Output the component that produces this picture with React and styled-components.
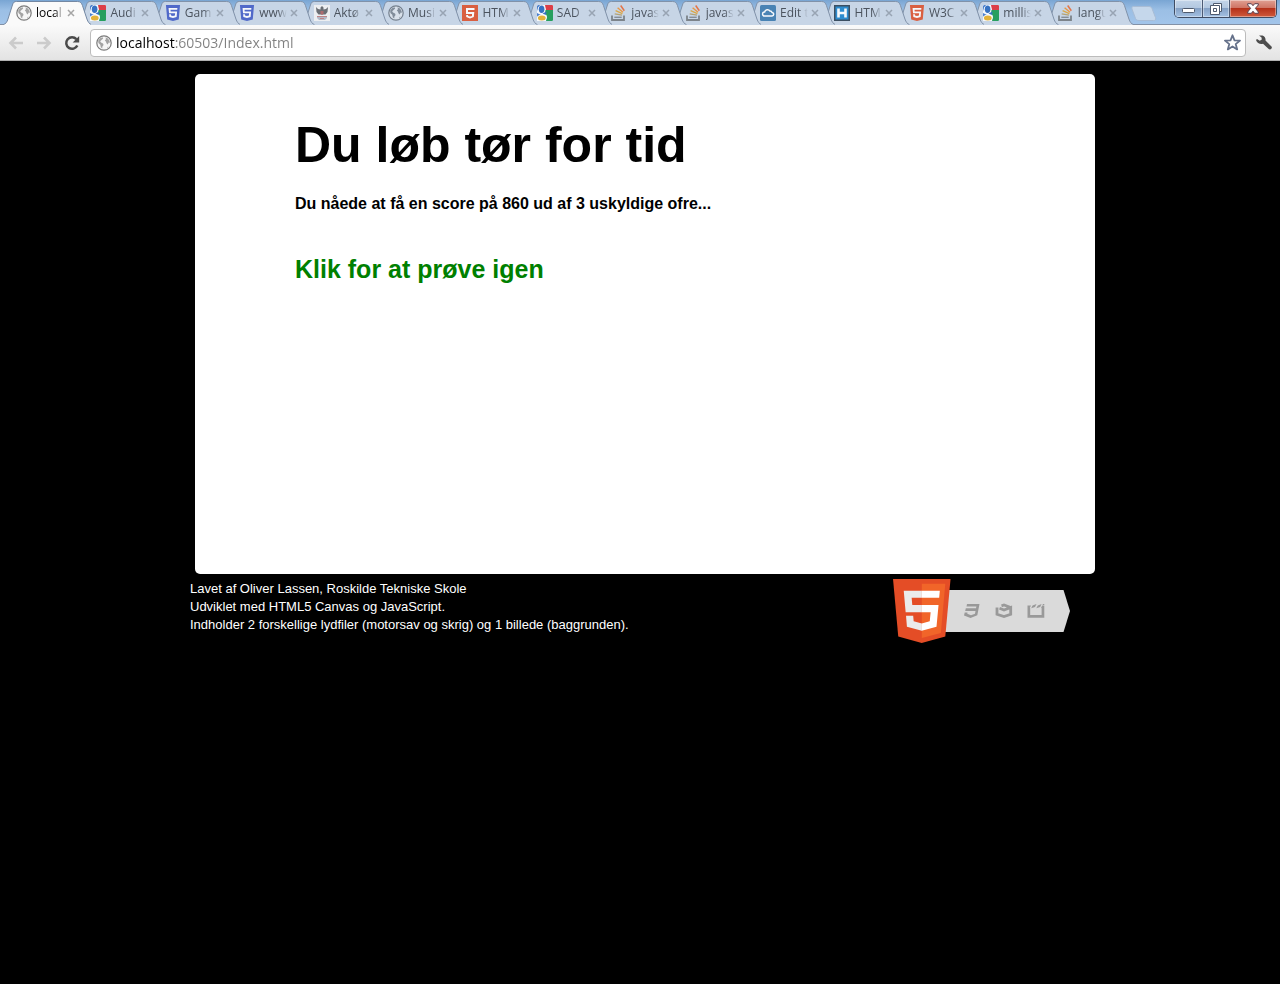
import React from "react";
import styled, { createGlobalStyle, css } from "styled-components";

const GlobalStyle = createGlobalStyle`
  * { box-sizing: border-box; }
  html, body { margin: 0; background: #000; }
  body { font-family: "Liberation Sans", Arial, sans-serif; }
  button { border: 0; padding: 0; background: none; font: inherit; cursor: pointer; }
  svg { display: block; flex: none; }
`;

const TitleBar = styled.header`
  display: flex;
  align-items: flex-start;
  height: 25px;
  padding-left: 4px;
  overflow: hidden;
  background: linear-gradient(to bottom, #79a5d3 0, #9bbfe5 10px, #a3c5ea 100%);
  box-shadow: inset 0 -1px #8391a6;
`;

const TabStrip = styled.nav`
  display: flex;
  flex: 1 1 0;
  min-width: 0;
`;

const Tab = styled.div`
  position: relative;
  z-index: ${(p) => p.$level};
  display: flex;
  align-items: center;
  flex: 1 1 0;
  min-width: 0;
  height: 25px;
  padding: 1px 0 0 12px;
`;

const TabShape = styled.svg`
  position: absolute;
  inset: 0;
  z-index: -1;
  width: calc(100% + 13px);
  height: 25px;
`;

const TabTitle = styled.button`
  display: flex;
  align-items: center;
  gap: 4px;
  width: 51px;
  flex: none;
  font-family: "Open Sans", sans-serif;
  font-size: 12px;
  line-height: 16px;
  color: ${(p) => (p.$active ? "#000" : "#4b535e")};
  > svg { opacity: ${(p) => (p.$active ? 1 : 0.85)}; }
`;

const TabLabel = styled.span`
  flex: 1 1 0;
  min-width: 0;
  white-space: nowrap;
  text-align: left;
  mask-image: linear-gradient(to right, #000 60%, transparent 90%);
`;

const TabClose = styled.button`
  color: ${(p) => (p.$active ? "#a5a5a5" : "#98a4b3")};
`;

const NewTab = styled.button`
  margin: 6px 17px 0 11px;
`;

const WindowControls = styled.div`
  display: flex;
  height: 18px;
  margin-right: 3px;
  border: 1px solid #3f4c63;
  border-top: 0;
  border-radius: 0 0 5px 5px;
  overflow: hidden;
`;

const WindowButton = styled.button`
  display: flex;
  align-items: center;
  justify-content: center;
  width: 27px;
  background: linear-gradient(#c3d5e9 0, #b3c8e0 45%, #86a2c6 50%, #a3c0e2 100%);
  box-shadow: inset 0 0 0 1px rgba(255, 255, 255, 0.4);
  & + & { border-left: 1px solid #4c5b74; }
  ${(p) =>
    p.$danger &&
    css`
      width: 47px;
      background: linear-gradient(#e0a093 0, #cf7565 45%, #b5311a 50%, #cf5a3c 100%);
    `}
`;

const Toolbar = styled.div`
  display: flex;
  align-items: center;
  height: 36px;
  padding: 0 8px;
  background: linear-gradient(#fafafa, #e3e3e3);
  border-bottom: 1px solid #b0b0b0;
`;

const ToolButton = styled.button`
  width: 16px;
  height: 16px;
  margin-right: 12px;
  &:last-child { margin: 0 0 0 10px; }
`;

const AddressBar = styled.label`
  display: flex;
  align-items: center;
  flex: 1 1 0;
  min-width: 0;
  height: 28px;
  margin-left: -2px;
  padding: 0 4px 0 5px;
  background: #fff;
  border: 1px solid #bcbcbc;
  border-radius: 4px;
`;

const AddressInput = styled.input`
  flex: 1 1 0;
  min-width: 0;
  height: 20px;
  margin: 0 4px;
  padding: 0;
  border: 0;
  outline: 0;
  font-family: "Open Sans", sans-serif;
  font-size: 14px;
  line-height: 20px;
  color: transparent;
  background: linear-gradient(to right, #000 59px, #808080 59px);
  background-clip: text;
  -webkit-background-clip: text;
`;

const Page = styled.main`
  max-width: 900px;
  margin: 0 auto;
  padding-top: 13px;
`;

const GamePanel = styled.section`
  min-height: 500px;
  margin: 0 -5px 5px 5px;
  padding: 41px 100px;
  background: #fff;
  border-radius: 5px;
  color: #000;
`;

const Heading = styled.h1`
  margin: 0 0 19px;
  font-size: 50px;
  line-height: 60px;
`;

const Score = styled.p`
  margin: 0 0 40px;
  font-size: 16px;
  font-weight: bold;
  line-height: 20px;
`;

const RetryButton = styled.button`
  display: block;
  font-size: 25px;
  font-weight: bold;
  line-height: 30px;
  color: #008000;
`;

const Footer = styled.footer`
  display: flex;
  justify-content: space-between;
  align-items: flex-start;
  padding-right: 20px;
`;

const Credits = styled.p`
  margin: 1px 0 0;
  font-size: 13px;
  line-height: 18px;
  color: #fff;
`;

const shieldWhite =
  "M114 94H397L392 150H176L181 208H387L371 382 255 414 139 382 132 293H188L192 338 255 355 318 338 325 265H129z";

const Globe = ({ muted }) => (
  <svg width="16" height="16" viewBox="0 0 16 16">
    <circle cx="8" cy="8" r="7.2" fill={muted ? "#dde4ec" : "#f6f6f6"} stroke={muted ? "#66717e" : "#7b7b7b"} strokeWidth="1.2" />
    <path d="M2.2 5.5 4 3.2 6.5 2.2 7.2 3.4 5.8 4.8 4.2 6.2 5 7.6 7 8.5 7.6 10 6.4 11.6 6.2 13.6 4.8 12.2 4.3 9.8 2.4 8zM9.5 2.2 12 3.4 13.6 6 13.7 8 12.6 7.6 11.8 9.6 10.6 8.6 9.8 6.6 8.8 5.2 10 4.2zM11 12.2 12.6 11.4 11.2 13z" fill={muted ? "#75808d" : "#a3a3a3"} />
  </svg>
);

const Google = () => (
  <svg width="16" height="16" viewBox="0 0 16 16">
    <path d="M0 0h16v16H0z" fill="#fff" />
    <path d="M8 0h7a1 1 0 0 1 1 1v4H9z" fill="#e0242d" />
    <path d="M8.500 5H16v10a1 1 0 0 1-1 1H9l1-4-2-4z" fill="#0c9648" />
    <path d="M0 6V1l1-1h2L1 4zM0 8l4 2-4 2z" fill="#3a74c9" />
    <path d="M5 .2C8.200.2 9 4 7.800 6.200 7.200 8 10 9 9.700 12.500 9.300 15.500 7 16 5 16 2 16 0 14.500 0 12.800 0 10.500 3 10 5 9.600L4.600 8.400C1.600 8.400.4 6 .7 4 1 1.400 3 .2 5 .2z" fill="#fff" />
    <ellipse cx="4.600" cy="4.200" rx="2.800" ry="3.700" fill="#1d61bd" />
    <ellipse cx="4.800" cy="13" rx="3.900" ry="2.500" fill="#e9ae1b" />
    <path d="M5.500 8.500 9.500 6.500 9 10z" fill="#1d61bd" />
  </svg>
);

const Shield = ({ color }) => (
  <svg width="16" height="16" viewBox="0 0 512 512">
    <path d="M71 460 30 0H481L440 460 255 512z" fill={color} />
    <path d={shieldWhite} fill="#fff" />
  </svg>
);

const HtmlSquare = () => (
  <svg width="16" height="16" viewBox="0 0 16 16">
    <path d="M0 0h16v16H0z" fill="#dd4b25" />
    <path d="M4 3h8.5v2H6v2h6.3l-.5 5L8 13.5 4.2 12V10H6l.2 1 1.8.6 2-.6V9H4z" fill="#fff" />
  </svg>
);

const Crest = () => (
  <svg width="16" height="16" viewBox="0 0 16 16">
    <path d="M0 0h16v16H0z" fill="#f3f3f3" />
    <path d="M2 2 4 4 6.500 4.500 6.500 2.500 8 1 9.500 2.500 9.500 4.500 12 4 14 2 13.500 7 11.500 9.500 4.500 9.500 2.500 7z" fill="#5a5d61" />
    <path d="M6.500 6h3v3L8 10 6.500 9z" fill="#a8595b" />
    <path d="M3 11h10v2l-2 2H5l-2-2z" fill="#aeb6c5" />
    <path d="M3 11h10v1H3zM6 13h4v1H6z" fill="#bd7678" />
  </svg>
);

const Stack = () => (
  <svg width="16" height="16" viewBox="0 0 16 16" fill="none">
    <path d="M1 10.500V15h12v-4.500" stroke="#6f757b" strokeWidth="1.800" />
    <path d="M3.300 12.300h7.400" stroke="#7b8188" strokeWidth="1.400" />
    <path d="m3.700 8.900 7.300 1.300" stroke="#b29a62" strokeWidth="1.300" />
    <path d="m4.600 5.700 6.800 3" stroke="#dda02b" strokeWidth="1.400" />
    <path d="m6.600 2.700 5.400 4.600" stroke="#ee8d27" strokeWidth="1.400" />
    <path d="m9.700.5 3.600 5.200" stroke="#e8642e" strokeWidth="1.500" />
  </svg>
);

const Cloud = () => (
  <svg width="16" height="16" viewBox="0 0 16 16">
    <rect width="16" height="16" rx="1.500" fill="#3475ac" />
    <path d="M4.500 11h7.300a1.800 1.800 0 0 0 .2-3.600 2 2 0 0 0-2-1.400A3 3 0 0 0 4.600 7 2 2 0 0 0 4.500 11z" fill="none" stroke="#fff" strokeWidth="1.500" />
  </svg>
);

const LetterH = () => (
  <svg width="16" height="16" viewBox="0 0 16 16">
    <path d="M.75.75h14.500v14.500H.75z" fill="#1480cb" stroke="#24384b" strokeWidth="1.500" />
    <path d="M4.500 3.500v9M11.500 3.500v9M5 8h6" stroke="#fff" strokeWidth="2.600" />
  </svg>
);

const tabs = [
  { label: "local", icon: <Globe /> },
  { label: "Audi", icon: <Google /> },
  { label: "Gam", icon: <Shield color="#3c57c4" /> },
  { label: "www", icon: <Shield color="#3c57c4" /> },
  { label: "Aktø", icon: <Crest /> },
  { label: "Musi", icon: <Globe muted /> },
  { label: "HTM", icon: <HtmlSquare /> },
  { label: "SAD", icon: <Google /> },
  { label: "javas", icon: <Stack /> },
  { label: "javas", icon: <Stack /> },
  { label: "Edit t", icon: <Cloud /> },
  { label: "HTM", icon: <LetterH /> },
  { label: "W3C", icon: <Shield color="#dd4b25" /> },
  { label: "millis", icon: <Google /> },
  { label: "langu", icon: <Stack /> },
];

const tabPath = "M-1 24.5C2 24 3 22 4 19L8.5 5C9.5 2 10.5 1.5 12.5 1.5H74C77 1.5 78 3 79 5.5L83.5 19C84.5 22 86 24 88 24.5";

const BrowserTab = ({ label, icon, active, level }) => (
  <Tab $level={level}>
    <TabShape viewBox="0 0 88 25" preserveAspectRatio="none" aria-hidden="true">
      <path d={`${tabPath}V26H-1z`} fill={active ? "#fafafa" : "#c7d5e6"} />
      <path d={tabPath} fill="none" stroke={active ? "#7388a3" : "#8192a9"} />
    </TabShape>
    <TabTitle $active={active}>
      {icon}
      <TabLabel>{label}</TabLabel>
    </TabTitle>
    <TabClose $active={active} aria-label="Luk fane">
      <svg width="8" height="8" viewBox="0 0 8 8">
        <path d="m1 1 6 6M7 1 1 7" stroke="currentColor" strokeWidth="1.5" />
      </svg>
    </TabClose>
  </Tab>
);

const Arrow = ({ flip }) => (
  <svg width="16" height="16" viewBox="0 0 16 16">
    <path d="M8 2.5 2.5 8 8 13.5M3 8h12" transform={flip ? "matrix(-1 0 0 1 16 0)" : undefined} fill="none" stroke="#cbcbcb" strokeWidth="2.6" />
  </svg>
);

const Html5Badge = () => (
  <svg width="177" height="64" viewBox="0 0 177 64" role="img" aria-label="HTML5">
    <path d="M50 11H170.5L177 32 170.5 53H50z" fill="#dadada" />
    <g transform="translate(-3.8) scale(.1275 .125)">
      <path d="M71 460 30 0H481L440 460 255 512z" fill="#e44d26" />
      <path d="M256 472 405 431 440 37H256z" fill="#f16529" />
      <path d="M256 208H181L176 150H256V94H114L129 265H256zM256 355 192 338 188 293H132L139 382 256 414z" fill="#ebebeb" />
      <path d="M255 208V265H325L318 338 255 355V414L371 382 387 208zM255 94V150H392L397 94z" fill="#fff" />
    </g>
    <g fill="#999">
      <path d="M74 25H86.5L84.3 36.3 77.5 39 71 36.5 71.7 33.5H74.5L74.3 34.8 78 36.2 82 34.7 82.5 32H72.2L72.8 29.3H83L83.4 27.5H73.5z" />
      <path d="M104 28.500V35.200L111 37.600 117.700 35.200V28.500L111 31 106.500 29.300M117.700 28.500 111 26 108.500 26.800" fill="none" stroke="#999" strokeWidth="2.800" />
      <path d="M134.500 26.500H138L136.800 29H137.200V36H148.600V29H148L149.200 26.500H151.300V38.800H134.500zM139.500 26.500 143.500 25 142 28 138.200 29.300zM144.800 26.500 148.600 25 147.200 28 143.300 29.300zM150 25H151.300V26H149.500z" />
    </g>
  </svg>
);

export default function App() {
  return (
    <>
      <GlobalStyle />
      <TitleBar>
        <TabStrip aria-label="Faner">
          {tabs.map((tab, i) => (
            <BrowserTab key={i} {...tab} active={i === 0} level={tabs.length - i} />
          ))}
        </TabStrip>
        <NewTab aria-label="Ny fane">
          <svg width="26" height="15" viewBox="0 0 26 15">
            <path d="M2.5.5H18c2 0 2.5 1 3 2l3.5 9c.5 2 0 3-2 3H8c-2 0-3-1-3.500-2L1 3C.5 1.500 1 .5 2.500.5z" fill="#c5d7eb" stroke="#a8bcd5" />
          </svg>
        </NewTab>
        <WindowControls>
          <WindowButton aria-label="Minimer">
            <svg width="13" height="10" viewBox="0 0 13 10">
              <rect x=".5" y="4.500" width="12" height="4" rx="1" fill="#fff" stroke="#4e5a6d" />
            </svg>
          </WindowButton>
          <WindowButton aria-label="Gendan">
            <svg width="12" height="12" viewBox="0 0 12 12" fill="#fff" stroke="#4e5a6d">
              <path d="M3.5.5h8v8h-8z" />
              <path d="M.5 2.5h9v9h-9zM3.5 5.5h3v3h-3z" fillRule="evenodd" />
            </svg>
          </WindowButton>
          <WindowButton $danger aria-label="Luk">
            <svg width="12" height="11" viewBox="0 0 12 11">
              <path d="M.7.7h3.6L6 2.7 7.7.7h3.6V2L8.4 5.3 11.3 9v1.3H7.7L6 8.2l-1.7 2.1H.7V9l2.9-3.7L.7 2z" fill="#fff" stroke="#5b4250" />
            </svg>
          </WindowButton>
        </WindowControls>
      </TitleBar>
      <Toolbar>
        <ToolButton aria-label="Tilbage"><Arrow /></ToolButton>
        <ToolButton aria-label="Frem"><Arrow flip /></ToolButton>
        <ToolButton aria-label="Genindlæs">
          <svg width="16" height="16" viewBox="0 0 16 16">
            <path d="M13.3 10.5A5.8 5.8 0 1 1 12.4 4.2" fill="none" stroke="#4a4a4a" strokeWidth="2.5" />
            <path d="M15.2 1v6.5H8.7z" fill="#4a4a4a" />
          </svg>
        </ToolButton>
        <AddressBar>
          <Globe />
          <AddressInput aria-label="Adresse" defaultValue="localhost:60503/Index.html" spellCheck={false} />
          <svg width="17" height="17" viewBox="0 0 17 17">
            <path d="m8.5 1.3 2 5 5.5.3-4.3 3.5 1.5 5.3-4.7-3-4.7 3 1.5-5.3L1 6.6l5.5-.3z" fill="#fff" stroke="#65718a" strokeWidth="1.8" strokeLinejoin="round" />
          </svg>
        </AddressBar>
        <ToolButton aria-label="Indstillinger">
          <svg width="16" height="16" viewBox="0 0 16 16">
            <path d="M3 .5 6.500.5C9 1.500 9.800 3.500 9.500 5.500l6 6c1.300 1.800-1.200 4-2.800 2.600L7 8.700C4 9.500 1 8 0 5L1 4l2.800 1.700L5.800 4.500 5.500 2.500z" fill="#4d4d4d" />
          </svg>
        </ToolButton>
      </Toolbar>
      <Page>
        <GamePanel>
          <Heading>Du løb tør for tid</Heading>
          <Score>Du nåede at få en score på 860 ud af 3 uskyldige ofre...</Score>
          <RetryButton>Klik for at prøve igen</RetryButton>
        </GamePanel>
        <Footer>
          <Credits>
            Lavet af Oliver Lassen, Roskilde Tekniske Skole
            <br />
            Udviklet med HTML5 Canvas og JavaScript.
            <br />
            Indholder 2 forskellige lydfiler (motorsav og skrig) og 1 billede (baggrunden).
          </Credits>
          <Html5Badge />
        </Footer>
      </Page>
    </>
  );
}
